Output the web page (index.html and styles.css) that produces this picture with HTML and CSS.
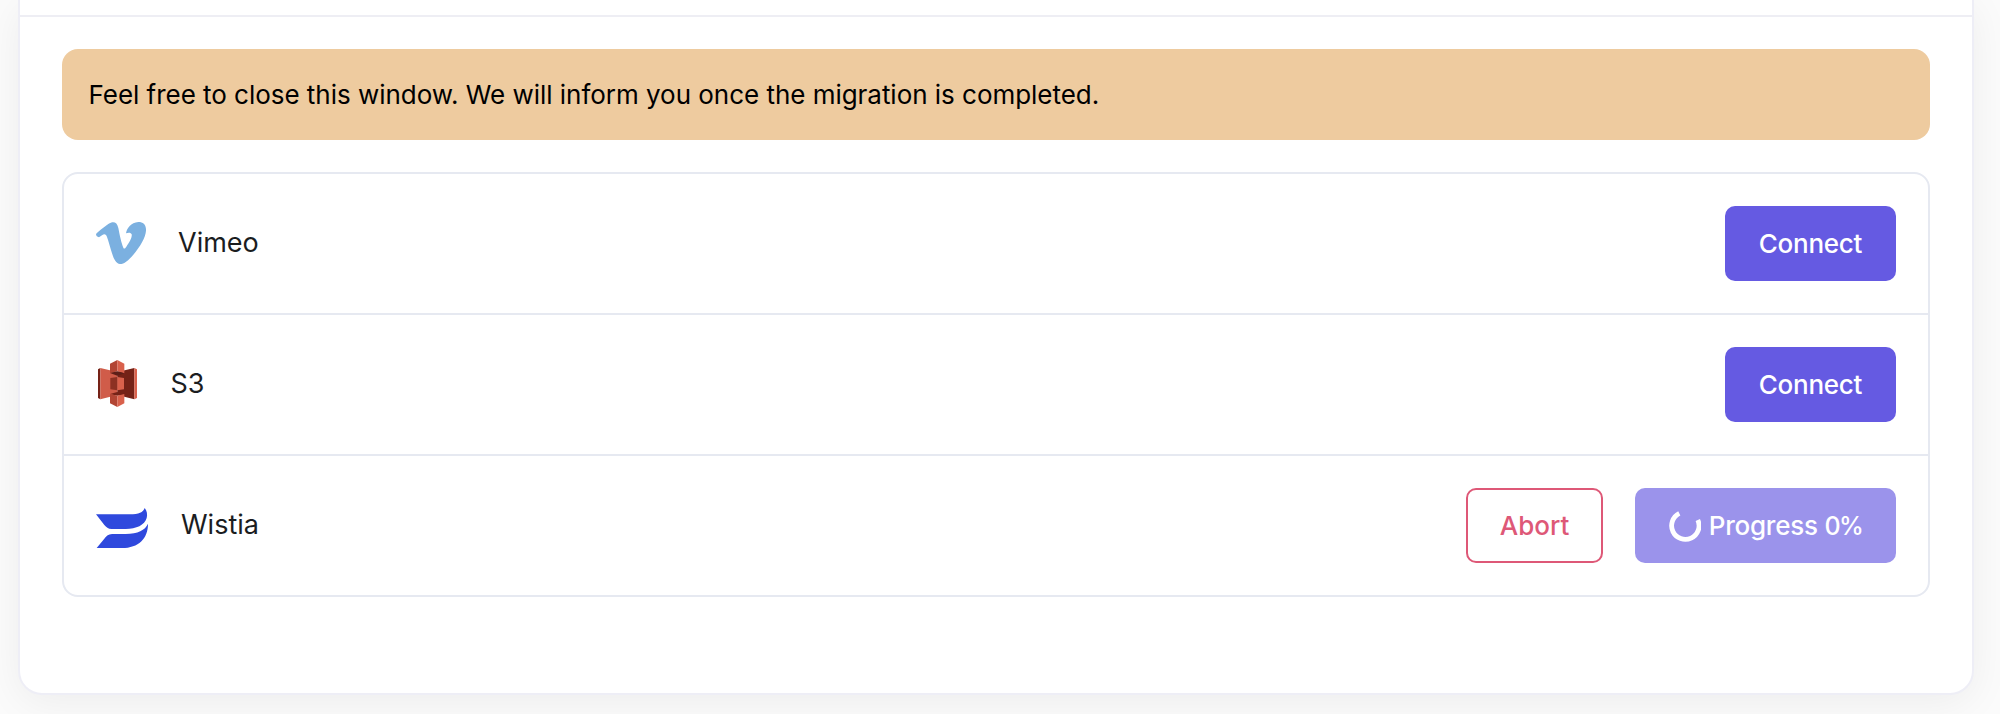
FILE: index.html
```
<!DOCTYPE html>
<html lang="en">
<head>
<meta charset="utf-8">
<title>Migration</title>
<link rel="stylesheet" href="styles.css">
</head>
<body>
<main class="card">
  <header class="card-header"></header>
  <section class="card-body">
    <p class="notice">Feel free to close this window. We will inform you once the migration is completed.</p>
    <ul class="sources">
      <li class="source">
        <svg class="logo vimeo" viewBox="48 66 150 126" aria-hidden="true"><path fill="#7bb0e0" d="M48 103C49 98 72 82 85 72C99 63 111 65 115 84C119 104 124 129 130 143C132 148 135 146 139 140C149 126 157 111 155 103C153 97 145 97 138 100C140 85 153 67 175 66C191 66 199 76 198 92C197 112 180 140 160 164C146 181 132 192 120 192C108 191 101 176 96 160C90 142 86 124 81 111C78 102 73 101 66 106L57 112C52 111 48 107 48 103Z"/></svg>
        <span class="name">Vimeo</span>
        <div class="actions"><button class="btn primary">Connect</button></div>
      </li>
      <li class="source">
        <svg class="logo s3" viewBox="53 61 117 141" aria-hidden="true">
          <path fill="#752217" d="M60 85L53 89V175L60 179Z"/>
          <path fill="#d05c49" d="M60 85L111 97V166L60 179Z"/>
          <path fill="#752217" d="M162 85L111 97V166L162 179Z"/>
          <path fill="#d9614c" d="M162 85L170 89V175L162 179Z"/>
          <path fill="#b24534" d="M111 61L89 72V100L111 95Z"/>
          <path fill="#d9614c" d="M111 61L132 72V101L111 95Z"/>
          <path fill="#5e1f18" d="M89 100L111 95L132 101L111 108Z"/>
          <path fill="#8c3123" d="M90 115L111 112V152L90 149Z"/>
          <path fill="#d9614c" d="M131 115L111 112V152L131 149Z"/>
          <path fill="#752217" d="M89 163L111 168L132 163L111 157Z"/>
          <path fill="#b24534" d="M89 163L111 168V202L89 191Z"/>
          <path fill="#d9614c" d="M132 163L111 168V202L132 191Z"/>
        </svg>
        <span class="name">S3</span>
        <div class="actions"><button class="btn primary">Connect</button></div>
      </li>
      <li class="source">
        <svg class="logo wistia" viewBox="48 54 156 120" aria-hidden="true"><path fill="#2f49dd" d="M48 73H150C176 73 190 67 194 54C201 62 203 75 200 84C194 105 169 117 137 117H95C84 117 79 112 73 105ZM204 101C204 145 176 174 126 174H50L73 146C81 135 88 132 101 132H137C174 131 195 121 204 101Z"/></svg>
        <span class="name">Wistia</span>
        <div class="actions">
          <button class="btn danger">Abort</button>
          <button class="btn primary busy"><svg class="spinner" viewBox="0 0 32 32" aria-hidden="true"><path fill="none" stroke="#fff" stroke-width="4.8" d="M10.3 3.4A13.7 13.7 0 1 0 28.8 10"/></svg><span>Progress <span class="percent">0%</span></span></button>
        </div>
      </li>
    </ul>
  </section>
</main>
</body>
</html>
```
FILE: styles.css
```
* { box-sizing: border-box; }
body {
  margin: 0;
  height: 714px;
  overflow: hidden;
  background: #fbfbfb;
  font-family: Inter, "Liberation Sans", sans-serif;
  font-size: 26px;
}
.card {
  width: 1956px;
  height: 695px;
  margin-left: 18px;
  border: 2px solid #eeeef6;
  border-top: 0;
  border-radius: 0 0 24px 24px;
  background: #fff;
  box-shadow: 0 8px 40px rgba(0, 0, 0, 0.06);
}
.card-header { height: 17px; border-bottom: 2px solid #eeeef4; }
.card-body { padding: 32px 42px; }
.notice {
  margin: 0 0 32px;
  height: 91px;
  padding: 0 26.5px;
  border-radius: 16px;
  background: #eecb9f;
  color: #000;
  letter-spacing: -0.03px;
  line-height: 91px;
  white-space: nowrap;
}
.sources {
  margin: 0;
  padding: 0;
  list-style: none;
  border: 2px solid #e6e9f1;
  border-radius: 16px;
}
.source {
  display: flex;
  align-items: center;
  padding: 32px;
  color: #1b1d1f;
  white-space: nowrap;
}
.source + .source { border-top: 2px solid #e6e9f1; }
.logo { display: block; flex: none; }
.vimeo { width: 50px; height: 42px; margin: 0 32px 1px 0; }
.s3 { width: 39px; height: 47px; margin: 0 34px 2px 1.5px; }
.wistia { width: 52px; height: 40px; margin: 4px 33px 0 0; }
.name { line-height: 40px; padding-bottom: 2px; font-size: 27px; }
.actions { display: flex; gap: 32px; margin-left: auto; }
.btn {
  display: flex;
  align-items: center;
  justify-content: center;
  height: 75px;
  width: 171px;
  padding: 0;
  border: 0;
  border-radius: 10px;
  font: inherit;
  font-weight: 500;
  letter-spacing: -0.25px;
  white-space: nowrap;
}
.primary { background: #655ae2; color: #fff; }
.danger { width: 137px; border: 2px solid #de5877; background: #fff; color: #de5877; letter-spacing: 0; }
.busy { width: 261px; background: #9b93eb; gap: 8px; letter-spacing: -0.25px; }
.percent { font-size: 25px; letter-spacing: -1.6px; }
.spinner { width: 32px; height: 32px; }
```
